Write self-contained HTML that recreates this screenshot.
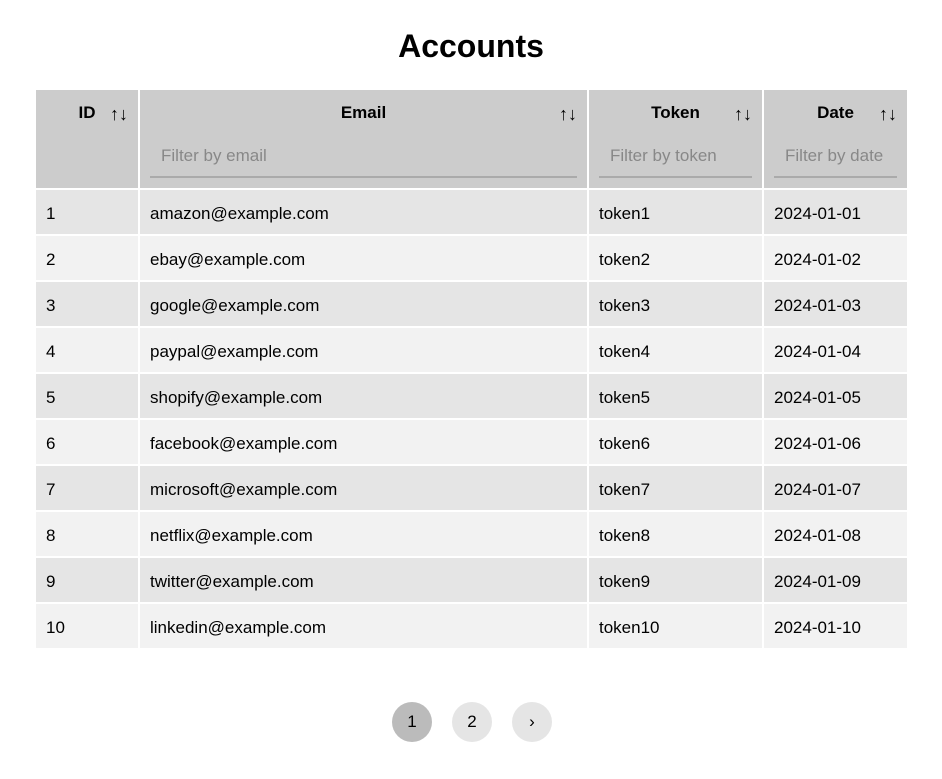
<!DOCTYPE html>
<html><head><style>
body{margin:0;background:#fff;font-family:"Comic Sans MS","Liberation Sans",sans-serif;width:942px;height:779px;position:relative;overflow:hidden}
h1{position:absolute;top:26px;left:0;width:942px;text-align:center;margin:0;font-size:32px;line-height:40px;font-weight:bold}
table{position:absolute;left:34px;top:88px;border-collapse:separate;border-spacing:2px;font-size:17px}
th{background:#ccc;height:98px;vertical-align:top;padding:0;position:relative;font-weight:bold;font-size:17px}
td{height:44px;padding:3px 0 0 10px;box-sizing:border-box;text-align:left}
tr:nth-child(even) td{background:#e5e5e5}
tr:nth-child(odd) td{background:#f2f2f2}
.t{position:absolute;top:13px;left:0;right:0;text-align:center}
.s{position:absolute;top:14px;right:10px;font-weight:normal;font-size:18px}
.f{position:absolute;left:10px;right:10px;top:46px;height:42px;border-bottom:2px solid #aaa;color:#888;font-weight:normal;text-align:left;padding:10px 0 0 11px;box-sizing:border-box;white-space:nowrap;overflow:hidden}
.pg{position:absolute;top:702px;width:40px;height:40px;border-radius:50%;background:#e5e5e5;text-align:center;line-height:40px;font-size:17px}
</style></head><body>
<h1>Accounts</h1>
<table>
<tr><th style="width:102px"><span class="t" style="left:0px">ID</span><span class="s">↑↓</span></th>
<th style="width:447px"><span class="t">Email</span><span class="s">↑↓</span><div class="f">Filter by email</div></th>
<th style="width:173px"><span class="t">Token</span><span class="s">↑↓</span><div class="f">Filter by token</div></th>
<th style="width:143px"><span class="t">Date</span><span class="s">↑↓</span><div class="f">Filter by date</div></th></tr>
<tr><td>1</td><td>amazon@example.com</td><td>token1</td><td>2024-01-01</td></tr>
<tr><td>2</td><td>ebay@example.com</td><td>token2</td><td>2024-01-02</td></tr>
<tr><td>3</td><td>google@example.com</td><td>token3</td><td>2024-01-03</td></tr>
<tr><td>4</td><td>paypal@example.com</td><td>token4</td><td>2024-01-04</td></tr>
<tr><td>5</td><td>shopify@example.com</td><td>token5</td><td>2024-01-05</td></tr>
<tr><td>6</td><td>facebook@example.com</td><td>token6</td><td>2024-01-06</td></tr>
<tr><td>7</td><td>microsoft@example.com</td><td>token7</td><td>2024-01-07</td></tr>
<tr><td>8</td><td>netflix@example.com</td><td>token8</td><td>2024-01-08</td></tr>
<tr><td>9</td><td>twitter@example.com</td><td>token9</td><td>2024-01-09</td></tr>
<tr><td>10</td><td>linkedin@example.com</td><td>token10</td><td>2024-01-10</td></tr>
</table>
<div class="pg" style="left:392px;background:#bbb">1</div>
<div class="pg" style="left:452px">2</div>
<div class="pg" style="left:512px">›</div>
</body></html>
